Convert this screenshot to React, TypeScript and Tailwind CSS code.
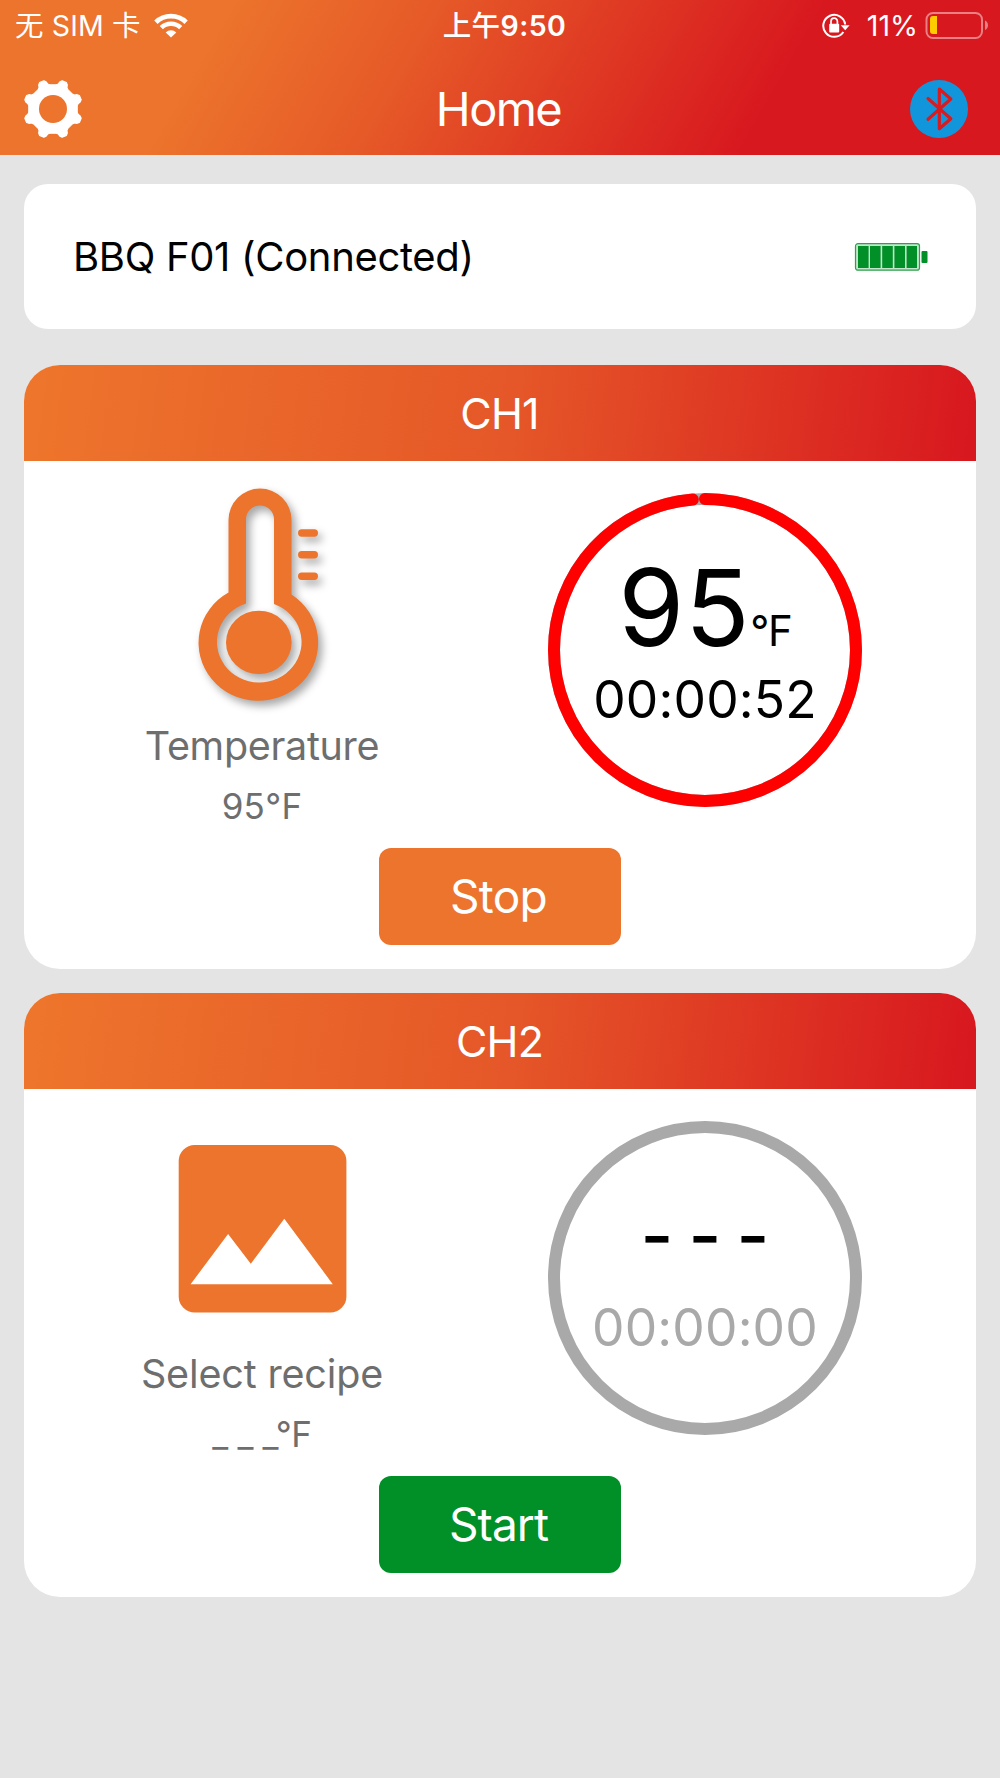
import type { ReactNode } from 'react'

type Channel = {
  name: string
  icon: ReactNode
  label: string
  target: string
  labelClass: string
  targetClass: string
  progress: number
  reading: ReactNode
  timer: string
  timerClass: string
  action: string
  actionClass: string
}

const RING_RADIUS = 151
const RING_LENGTH = 2 * Math.PI * RING_RADIUS

// eight-tooth gear outline around 0,0
const gearPoints = Array.from({ length: 8 }, (_, i) => 22.5 + i * 45)
  .flatMap((a) => [
    [a - 15, 24.4],
    [a - 10.5, 25.6],
    [a - 8.2, 28],
    [a - 4.5, 29.6],
    [a + 4.5, 29.6],
    [a + 8.2, 28],
    [a + 10.5, 25.6],
    [a + 15, 24.4],
  ])
  .map(([a, r]) => {
    const rad = (a * Math.PI) / 180
    return `${(Math.sin(rad) * r).toFixed(2)},${(-Math.cos(rad) * r).toFixed(2)}`
  })
  .join(' ')

function GearIcon() {
  return (
    <svg viewBox="-30 -30 60 60" className="h-[60px] w-[60px] overflow-visible">
      <polygon points={gearPoints} fill="white" stroke="white" strokeWidth="1.2" strokeLinejoin="round" />
      <circle r="14" fill="#ec742c" />
    </svg>
  )
}

function BluetoothIcon() {
  return (
    <svg viewBox="-30 -30 60 60" className="h-[60px] w-[60px]">
      <circle r="29" fill="#1296db" />
      <path
        d="M-11 -10.5 L11.8 9.7 L0.3 19.7 V-20 L11.8 -10 L-11 10.3"
        fill="none"
        stroke="#d91b20"
        strokeWidth="3.2"
        strokeLinecap="round"
        strokeLinejoin="round"
      />
    </svg>
  )
}

function WifiIcon() {
  return (
    <svg viewBox="0 0 34 25" className="h-[25px] w-[34px]" fill="none" stroke="white">
      <path d="M1.9 9.2 A21.8 21.8 0 0 1 32.1 9.2" strokeWidth="4.8" />
      <path d="M7.3 14.7 A14 14 0 0 1 26.7 14.7" strokeWidth="4.6" />
      <path d="M11.7 19.4 A7.6 7.6 0 0 1 22.3 19.4 L17 24.6 Z" fill="white" stroke="none" />
    </svg>
  )
}

function RotationLockIcon() {
  return (
    <svg viewBox="0 0 28 26" className="h-[26px] w-[28px]" fill="none" stroke="white" strokeWidth="2">
      <path d="M23.2 11.5 A11 11 0 1 0 21.4 19" />
      <path d="M18.8 12.2 H27.6 L23.2 17.2 Z" fill="white" stroke="none" />
      <rect x="7.2" y="10.8" width="10" height="8.8" rx="1" fill="white" stroke="none" />
      <path d="M9 11 V8.4 A3.2 3.2 0 0 1 15.4 8.4 V11" strokeWidth="1.7" />
    </svg>
  )
}

function PhoneBattery() {
  return (
    <svg viewBox="0 0 64 28" className="h-[28px] w-[64px]">
      <rect x="1.5" y="1" width="55.5" height="25" rx="6.5" fill="none" stroke="white" strokeOpacity="0.45" strokeWidth="2" />
      <path d="M12 4 V22 H8 Q5 22 5 19 V7 Q5 4 8 4 Z" fill="#ffcc00" />
      <path d="M60 8.5 Q63 10 63 13.3 Q63 16.6 60 18.1 Z" fill="white" fillOpacity="0.45" />
    </svg>
  )
}

function DeviceBattery() {
  return (
    <svg viewBox="0 0 74 28" className="h-[28px] w-[74px]" fill="#009027">
      <rect x="1.5" y="0.7" width="64" height="26.5" rx="2.5" fill="#c5e6cd" stroke="#2ba24b" strokeWidth="1.2" />
      <rect x="4" y="3" width="10.6" height="22" />
      <rect x="16" y="3" width="10.6" height="22" />
      <rect x="28.2" y="3" width="10.6" height="22" />
      <rect x="40.4" y="3" width="10.6" height="22" />
      <rect x="52.6" y="3" width="10.4" height="22" />
      <rect x="67.5" y="7.9" width="6" height="12.2" rx="1" />
    </svg>
  )
}

function ThermometerIcon() {
  return (
    <svg viewBox="182 470 160 250" className="h-[250px] w-[160px] drop-shadow-[4px_5px_4px_rgba(0,0,0,0.35)]">
      <g fill="#ec742c">
        <path
          fillRule="evenodd"
          d="M228.5 592.5 V520 A31.5 31.5 0 0 1 291.5 520 V594.5 A59.8 58 0 1 1 228.5 592.5 Z M246 603.5 V519.5 A14 14 0 0 1 274 519.5 V604 A42.3 40.5 0 1 1 246 603.5 Z"
        />
        <ellipse cx="258.8" cy="642.4" rx="32.8" ry="31.7" />
        <rect x="298" y="529.3" width="20" height="7.4" rx="3.7" />
        <rect x="298" y="551" width="20" height="7.4" rx="3.7" />
        <rect x="298" y="572.6" width="20" height="7.4" rx="3.7" />
      </g>
    </svg>
  )
}

function PictureIcon() {
  return (
    <svg viewBox="182 1098 160 250" className="h-[250px] w-[160px] overflow-visible">
      <rect x="178.7" y="1145" width="167.7" height="167.5" rx="16" fill="#ec742c" />
      <path d="M190.6 1284.2 L228.1 1234 L250.8 1263.7 L284.3 1218.7 L332.8 1284.2 Z" fill="white" />
    </svg>
  )
}

const channels: Channel[] = [
  {
    name: 'CH1',
    icon: <ThermometerIcon />,
    label: 'Temperature',
    target: '95°F',
    labelClass: 'tracking-[-0.008em]',
    targetClass: 'tracking-[0.008em]',
    progress: (RING_LENGTH - 12.6) / RING_LENGTH,
    reading: (
      <>
        <span className="text-[106.5px] tracking-[0.005em]">95</span>
        <span className="text-[42px] tracking-[-0.03em]">°F</span>
      </>
    ),
    timer: '00:00:52',
    timerClass: 'text-black',
    action: 'Stop',
    actionClass: 'bg-[#ec742c] pr-[9px] tracking-[-0.016em]',
  },
  {
    name: 'CH2',
    icon: <PictureIcon />,
    label: 'Select recipe',
    target: '_ _ _°F',
    labelClass: 'tracking-[-0.004em]',
    targetClass: 'tracking-[-0.01em]',
    progress: 0,
    reading: <span className="pr-[2px] text-[71px] font-medium tracking-[-0.026em]">- - -</span>,
    timer: '00:00:00',
    timerClass: 'text-[#a9a9a9]',
    action: 'Start',
    actionClass: 'bg-[#009027] pr-[9px] tracking-[-0.02em]',
  },
]

function Gauge({ progress, children }: { progress: number; children: ReactNode }) {
  return (
    <div className="relative mt-8 h-[314px] w-[314px]">
      <svg viewBox="-157 -157 314 314" className="absolute inset-0" fill="none" strokeWidth="12">
        <circle r={RING_RADIUS} stroke="#a9a9a9" />
        {progress > 0 && (
          <circle
            r={RING_RADIUS}
            stroke="#ff0000"
            strokeLinecap="round"
            strokeDasharray={`${RING_LENGTH * progress} ${RING_LENGTH}`}
            transform="rotate(-90)"
          />
        )}
      </svg>
      <div className="relative flex h-full flex-col items-center whitespace-nowrap">{children}</div>
    </div>
  )
}

function ChannelCard({ channel }: { channel: Channel }) {
  return (
    <section className="flex h-[604px] flex-col overflow-hidden rounded-[36px] bg-white">
      <h2 className="flex h-[96.3px] shrink-0 items-center justify-center bg-[linear-gradient(97deg,#ee762c_0%,#e55728_51%,#d8181f_99%)] pr-[1px] text-[43px] tracking-[-0.02em] text-white">
        {channel.name}
      </h2>
      <div className="grid h-[387px] shrink-0 grid-cols-2">
        <div className="flex flex-col items-center pt-[9px] text-[#6e6e6e]">
          {channel.icon}
          <p className={`text-[39.5px] leading-[52px] ${channel.labelClass}`}>{channel.label}</p>
          <p className={`text-[35px] leading-[68px] whitespace-pre ${channel.targetClass}`}>{channel.target}</p>
        </div>
        <div className="flex justify-center pr-[66px]">
          <Gauge progress={channel.progress}>
            <p className="flex h-[168px] items-baseline pt-[51px] leading-[127px] text-black">{channel.reading}</p>
            <p className={`text-[51.5px] leading-[76px] tracking-[0.003em] ${channel.timerClass}`}>{channel.timer}</p>
          </Gauge>
        </div>
      </div>
      <button className={`mx-auto h-[96.7px] w-[242px] shrink-0 rounded-[12px] pl-[6px] text-[46px] text-white ${channel.actionClass}`}>
        {channel.action}
      </button>
    </section>
  )
}

export default function App() {
  return (
    <div className="h-[1778px] w-[1000px] overflow-hidden bg-[#e4e4e4] font-['Inter','Noto_Sans_CJK_SC',sans-serif]">
      <header className="h-[154.6px] bg-[linear-gradient(120deg,#ec742c_21.5%,#e65a28_40%,#d8181f_76%)] text-white">
        <div className="grid h-[51px] grid-cols-3 items-center text-[28.5px] leading-[51px]">
          <div className="flex items-center pl-[15px]">
            <span className="tracking-[0.004em]">无 SIM 卡</span>
            <span className="ml-[13px]">
              <WifiIcon />
            </span>
          </div>
          <div className="pl-[9px] text-center font-medium tracking-[0.015em]">
            上午<span className="font-semibold">9:50</span>
          </div>
          <div className="flex items-center justify-end pr-[11px]">
            <RotationLockIcon />
            <span className="mr-[7px] ml-[17px]">11%</span>
            <PhoneBattery />
          </div>
        </div>
        <div className="flex h-[115px] items-center justify-between pr-[31px] pl-[23px]">
          <GearIcon />
          <h1 className="pt-[2px] pl-[5px] text-[47px] tracking-[-0.034em]">Home</h1>
          <BluetoothIcon />
        </div>
      </header>

      <main className="px-6 pt-[29.2px]">
        <div className="flex h-[145px] items-center justify-between rounded-[24px] bg-white pt-[2px] pr-[48px] pl-[49px]">
          <p className="text-[40px] tracking-[-0.008em] text-black">BBQ F01 (Connected)</p>
          <DeviceBattery />
        </div>
        <div className="mt-9 flex flex-col gap-6">
          {channels.map((channel) => (
            <ChannelCard key={channel.name} channel={channel} />
          ))}
        </div>
      </main>
    </div>
  )
}
